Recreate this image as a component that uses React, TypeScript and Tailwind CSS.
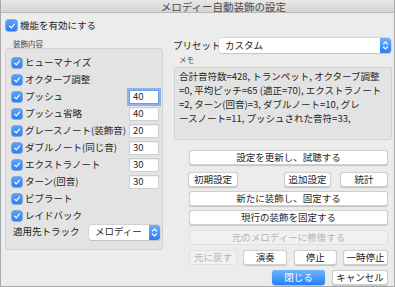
import React from "react";

function Check({ big = false }: { big?: boolean }) {
  return (
    <span
      className={
        (big ? "w-[11px] h-[11px]" : "w-[10px] h-[10px]") +
        " shrink-0 rounded-[2px] bg-linear-to-b from-[#5aa0fa] to-[#2f7ef2] flex items-center justify-center shadow-[0_0_0_0.5px_#2a6fd6]"
      }
    >
      <svg viewBox="0 0 10 10" className="w-[8px] h-[8px]">
        <path d="M2 5.2 L4.2 7.4 L8 2.6" fill="none" stroke="#fff" strokeWidth="1.5" strokeLinecap="round" strokeLinejoin="round" />
      </svg>
    </span>
  );
}

function Stepper() {
  return (
    <span className="w-[11px] self-stretch rounded-r-[3px] bg-linear-to-b from-[#6cb2fa] to-[#2a7ef0] flex items-center justify-center">
      <svg viewBox="0 0 11 15" className="w-[11px] h-[15px]">
        <path d="M3.5 6 L5.5 4 L7.5 6" fill="none" stroke="#fff" strokeWidth="1.1" strokeLinecap="round" strokeLinejoin="round" />
        <path d="M3.5 9 L5.5 11 L7.5 9" fill="none" stroke="#fff" strokeWidth="1.1" strokeLinecap="round" strokeLinejoin="round" />
      </svg>
    </span>
  );
}

function Btn({ children, className = "", disabled = false }: { children: React.ReactNode; className?: string; disabled?: boolean }) {
  return (
    <div
      className={
        "h-[15px] rounded-[3px] flex items-center justify-center text-[9.5px] leading-none " +
        (disabled
          ? "bg-[#f1f1f1] border border-[#e0e0e0] text-[#b3b3b3] "
          : "bg-white border border-[#d0d0d0] text-[#1e1e1e] shadow-[0_0.5px_1px_rgba(0,0,0,0.18)] ") +
        className
      }
    >
      {children}
    </div>
  );
}

const rows: { label: string; value?: string; focus?: boolean }[] = [
  { label: "ヒューマナイズ" },
  { label: "オクターブ調整" },
  { label: "プッシュ", value: "40", focus: true },
  { label: "プッシュ省略", value: "40" },
  { label: "グレースノート(装飾音)", value: "20" },
  { label: "ダブルノート(同じ音)", value: "30" },
  { label: "エクストラノート", value: "30" },
  { label: "ターン(回音)", value: "30" },
  { label: "ビブラート" },
  { label: "レイドバック" },
];

export default function App() {
  return (
    <div className="w-[395px] h-[287px] bg-[#ececec] border-x border-b border-[#a8a8a8] flex flex-col overflow-hidden font-['Noto_Sans_CJK_JP',sans-serif] text-[#1e1e1e]">
      <div className="h-[13px] shrink-0 bg-linear-to-b from-[#e8e8e8] to-[#d4d4d4] border-b border-[#b8b8b8] flex items-center justify-center pl-[52px] text-[10.5px] leading-[11px] text-[#4a4a4a]">
        <span className="pt-[1px]">メロディー自動装飾の設定</span>
      </div>
      <div className="flex flex-col px-[4px]">
        <div className="mt-[7px] ml-[1px] h-[11px] flex items-center gap-[3px] text-[9.5px] leading-none">
          <Check big />
          <span>機能を有効にする</span>
        </div>
        <div className="flex">
          <div className="w-[158px] shrink-0 flex flex-col">
            <div className="mt-[8px] h-[9px] pl-[8px] text-[7.5px] leading-[9px] text-[#444]">装飾内容</div>
            <div className="h-[202px] bg-[#e3e3e3] border border-[#d2d2d2] rounded-[3px] pt-[5px] flex flex-col">
              {rows.map((r) => (
                <div key={r.label} className="h-[17px] flex items-center pl-[6px] pr-[3px] text-[9.5px] leading-none">
                  <Check />
                  <span className="ml-[3px] flex-1 whitespace-nowrap">{r.label}</span>
                  {r.value ? (
                    <div
                      className={
                        "w-[30px] h-[14px] bg-white flex items-center pl-[3px] text-[9.5px] leading-none " +
                        (r.focus
                          ? "shadow-[0_0_0_2px_#8db3ef] border border-[#6d9be6]"
                          : "border border-[#cfcfcf] shadow-[inset_0_0.5px_1px_rgba(0,0,0,0.12)]")
                      }
                    >
                      {r.value}
                    </div>
                  ) : null}
                </div>
              ))}
              <div className="h-[16px] flex items-center pl-[7px] pr-[2px] text-[9.5px] leading-none">
                <span className="flex-1 whitespace-nowrap">適用先トラック</span>
                <div className="w-[71px] h-[15px] bg-white rounded-[3px] shadow-[0_0_0_0.5px_#c4c4c4,0_0.5px_1px_rgba(0,0,0,0.15)] flex items-center">
                  <span className="flex-1 pl-[6px]">メロディー</span>
                  <Stepper />
                </div>
              </div>
            </div>
          </div>
          <div className="ml-[7px] w-[221px] flex flex-col">
            <div className="mt-[7px] h-[15px] flex items-center pl-[3px] text-[9.5px] leading-none">
              <span className="w-[46px] whitespace-nowrap">プリセット</span>
              <div className="flex-1 h-[15px] bg-white rounded-[3px] shadow-[0_0_0_0.5px_#c4c4c4,0_0.5px_1px_rgba(0,0,0,0.15)] flex items-center">
                <span className="flex-1 pl-[6px]">カスタム</span>
                <Stepper />
              </div>
            </div>
            <div className="mt-[2px] h-[9px] pl-[9px] text-[7.5px] leading-[9px] text-[#444]">メモ</div>
            <div className="mt-[3px] ml-[4px] w-[218px] h-[73px] bg-[#e3e3e3] border border-[#d2d2d2] rounded-[2px] pl-[4px] pt-[1px] text-[9.5px] leading-[14px] whitespace-nowrap">
              <div>合計音符数=428, トランペット, オクターブ調整</div>
              <div>=0, 平均ピッチ=65 (適正=70), エクストラノート</div>
              <div>=2, ターン(回音)=3, ダブルノート=10, グレ</div>
              <div>ースノート=11, プッシュされた音符=33,</div>
            </div>
            <div className="mt-[10px] ml-[19px] w-[199px] flex flex-col">
              <Btn>設定を更新し、試聴する</Btn>
              <div className="mt-[7px] flex">
                <Btn className="w-[50px] -ml-[1px]">初期設定</Btn>
                <div className="flex-1" />
                <Btn className="w-[47px]">追加設定</Btn>
                <Btn className="w-[48px] ml-[9px]">統計</Btn>
              </div>
              <Btn className="mt-[4px]">新たに装飾し、固定する</Btn>
              <Btn className="mt-[4px]">現行の装飾を固定する</Btn>
              <Btn className="mt-[5px]" disabled>元のメロディーに修復する</Btn>
              <div className="mt-[5px] flex justify-between">
                <Btn className="w-[48px]" disabled>元に戻す</Btn>
                <Btn className="w-[44px]">演奏</Btn>
                <Btn className="w-[43px]">停止</Btn>
                <Btn className="w-[45px]">一時停止</Btn>
              </div>
              <div className="mt-[5px] flex justify-end gap-[7px]">
                <div className="w-[53px] h-[15px] rounded-[3px] bg-linear-to-b from-[#6db4fb] to-[#1f80f6] text-white text-[9.5px] leading-none flex items-center justify-center shadow-[0_0.5px_1px_rgba(0,0,0,0.2)]">
                  閉じる
                </div>
                <Btn className="w-[56px]">キャンセル</Btn>
              </div>
            </div>
          </div>
        </div>
      </div>
    </div>
  );
}
